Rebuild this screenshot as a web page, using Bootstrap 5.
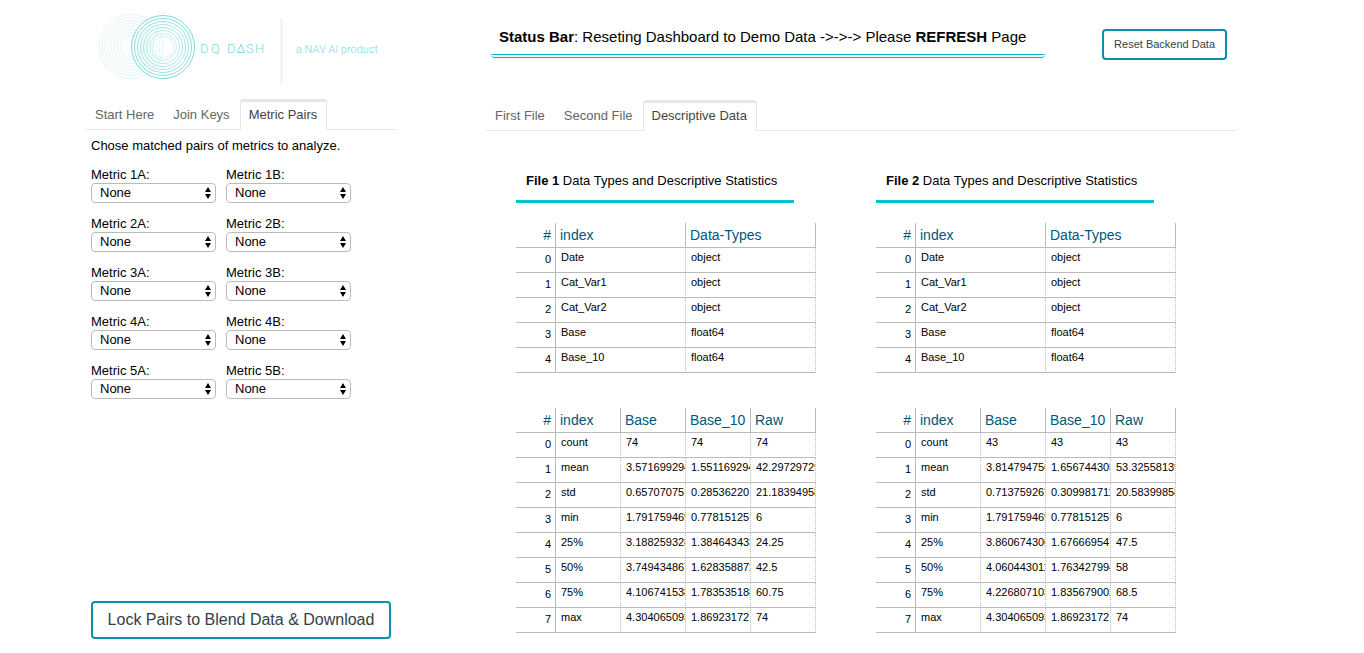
<!DOCTYPE html>
<html lang="en">
<head>
<meta charset="utf-8">
<meta name="viewport" content="width=device-width, initial-scale=1">
<title>DQ Dash</title>
<link href="https://cdn.jsdelivr.net/npm/bootstrap@5.3.0/dist/css/bootstrap.min.css" rel="stylesheet">
<style>
  body { font-family: "Liberation Sans", Arial, sans-serif; font-size: 13px; line-height: 16px; color: #000; background: #fff; }
  .page { padding: 0 128px 0 86px; column-gap: 90px; min-height: 100vh; }
  .side { flex: 0 0 310px; padding-bottom: 14px; }
  .main-area { flex: 1 1 0; min-width: 750px; }
  .brand-row { height: 99px; padding: 13px 0 0 12px; }
  .brand-row svg { font-family: Roboto, "Liberation Sans", sans-serif; }
  .status-row { height: 100px; padding-top: 21px; padding-left: 5px; }
  .status-bar { font-size: 15px; line-height: 20px; min-width: 554px; padding: 6px 8px 7px; border-bottom: 4px double #00b4c4; border-radius: 4px; }
  .btn-line { --bs-btn-color: #333f48; --bs-btn-border-color: #0a8fa8; --bs-btn-hover-bg: #e8f6f8; --bs-btn-hover-color: #333f48; --bs-btn-hover-border-color: #0a8fa8; --bs-btn-border-width: 2px; --bs-btn-border-radius: 4px; --bs-btn-bg: #fff; }
  .btn-reset { font-size: 11px; line-height: 15px; padding: 6px 10px; margin-top: 8px; margin-right: 9px; }
  .btn-lock { font-size: 16px; line-height: 22px; padding: 6px 0; width: 300px; }
  .nav-tabs { --bs-nav-tabs-border-color: #e6e6e6; --bs-nav-tabs-border-width: 1px; flex-wrap: nowrap; }
  .nav-tabs .nav-link { font-size: 13px; line-height: 16px; padding: 5px 9px 6px 8px; color: #666; border-width: 3px 1px 1px; border-radius: 4px 4px 0 0; border-color: transparent; }
  .nav-tabs .nav-link.active { color: #444; border-color: #e6e6e6 #e6e6e6 #fff; }
  .metric-form { padding-left: 5px; }
  .metric-grid { display: grid; grid-template-columns: 125px 125px; column-gap: 10px; row-gap: 12px; margin-top: 12px; }
  .metric-grid label { display: block; line-height: 17px; }
  .metric-grid select { display: block; width: 100%; height: 20px; appearance: none; border: 1px solid #bbb; border-radius: 4px; padding: 0 20px 0 8px; font-size: 13px; line-height: 18px; color: #000;
    background: #fff url("data:image/svg+xml,%3Csvg xmlns='http://www.w3.org/2000/svg' width='8' height='12'%3E%3Cpath d='M4 0L7 5H1zM4 12L1 7h6z' fill='%23000'/%3E%3C/svg%3E") no-repeat right 3px center; }
  .files { column-gap: 60px; padding: 40px 30px 20px; }
  .file-col { width: 300px; }
  .file-title { font-size: 13px; line-height: 20px; font-weight: 400; padding: 0 10px 9px; margin: 0 0 20px; width: 278px; border-bottom: 3px solid #00c2cb; white-space: nowrap; }
  .grid-table { width: 100%; table-layout: fixed; border-collapse: separate; border-spacing: 0; margin-bottom: 35px; font-size: 11px; }
  .grid-table th, .grid-table td { height: 25px; padding: 0 0 0 5px; border-bottom: 1px solid #bbb; border-right: 1px dotted #bbb; overflow: hidden; white-space: nowrap; vertical-align: top; line-height: 19px; font-weight: 400; }
  .grid-table thead th { font-size: 14px; line-height: 24px; color: #00577c; padding-left: 4px; border-right-style: solid; }
  .grid-table tr > :first-child { text-align: right; padding: 0 4px 0 0; border-right-style: solid; }
  .grid-table tbody th { line-height: 23px; }
  .col-num { width: 40px; }
</style>
</head>
<body>
<div class="page d-flex">
  <aside class="side d-flex flex-column">
    <header class="brand-row">
      <svg width="290" height="72" viewBox="0 0 290 72" role="img" aria-label="DQ Dash, a NAV AI product">
        <g fill="none" stroke="#38c6c9" stroke-width=".7" opacity=".2">
          <circle cx="33" cy="33.500" r="32"/><circle cx="33" cy="33.500" r="29"/><circle cx="33" cy="33.500" r="26"/><circle cx="33" cy="33.500" r="23"/><circle cx="33" cy="33.500" r="20"/><circle cx="33" cy="33.500" r="17"/><circle cx="33" cy="33.500" r="14"/><circle cx="33" cy="33.500" r="11"/>
        </g>
        <g fill="none" stroke="#1fbfc4" opacity=".65">
          <circle cx="65" cy="34" r="31.500" stroke-width=".9"/><circle cx="65" cy="34" r="28.500" stroke-width=".8"/><circle cx="65" cy="34" r="25.500" stroke-width=".7"/><circle cx="65" cy="34" r="22.500" stroke-width=".6"/><circle cx="65" cy="34" r="19.500" stroke-width=".6"/><circle cx="65" cy="34" r="16.500" stroke-width=".5"/><circle cx="65" cy="34" r="13.500" stroke-width=".4"/><circle cx="65" cy="34" r="11" stroke-width=".3"/>
        </g>
        <g fill="#7fdadc" font-weight="300">
          <text x="102" y="40" font-size="13">D</text><text x="113" y="40" font-size="13">Q</text><text x="129" y="40" font-size="13">D</text><text x="148" y="40" font-size="13">S</text><text x="157" y="40" font-size="13">H</text>
          <text x="198" y="40" font-size="11">a NAV AI product</text>
        </g>
        <path d="M143 31.500l-3.500 8h7z" fill="none" stroke="#7fdadc"/>
        <path d="M183.500 5v65" stroke="#eee" stroke-width="2"/>
      </svg>
    </header>
    <ul class="nav nav-tabs">
      <li class="nav-item"><a class="nav-link" href="#start">Start Here</a></li>
      <li class="nav-item"><a class="nav-link" href="#keys">Join Keys</a></li>
      <li class="nav-item"><a class="nav-link active" aria-current="page" href="#pairs">Metric Pairs</a></li>
    </ul>
    <form class="metric-form d-flex flex-column flex-grow-1">
      <p class="mb-0 mt-2">Chose matched pairs of metrics to analyze.</p>
      <div class="metric-grid">
        <div><label for="m1a">Metric 1A:</label><select id="m1a"><option>None</option></select></div>
        <div><label for="m1b">Metric 1B:</label><select id="m1b"><option>None</option></select></div>
        <div><label for="m2a">Metric 2A:</label><select id="m2a"><option>None</option></select></div>
        <div><label for="m2b">Metric 2B:</label><select id="m2b"><option>None</option></select></div>
        <div><label for="m3a">Metric 3A:</label><select id="m3a"><option>None</option></select></div>
        <div><label for="m3b">Metric 3B:</label><select id="m3b"><option>None</option></select></div>
        <div><label for="m4a">Metric 4A:</label><select id="m4a"><option>None</option></select></div>
        <div><label for="m4b">Metric 4B:</label><select id="m4b"><option>None</option></select></div>
        <div><label for="m5a">Metric 5A:</label><select id="m5a"><option>None</option></select></div>
        <div><label for="m5b">Metric 5B:</label><select id="m5b"><option>None</option></select></div>
      </div>
      <button type="button" class="btn btn-line btn-lock mt-auto">Lock Pairs to Blend Data &amp; Download</button>
    </form>
  </aside>

  <main class="main-area">
    <div class="status-row d-flex justify-content-between align-items-start">
      <div class="status-bar text-nowrap" role="status"><b>Status Bar</b>: Reseting Dashboard to Demo Data -&gt;-&gt;-&gt; Please <b>REFRESH</b> Page</div>
      <button type="button" class="btn btn-line btn-reset text-nowrap">Reset Backend Data</button>
    </div>
    <ul class="nav nav-tabs">
      <li class="nav-item"><a class="nav-link" href="#first">First File</a></li>
      <li class="nav-item"><a class="nav-link" href="#second">Second File</a></li>
      <li class="nav-item"><a class="nav-link active" aria-current="page" href="#descriptive">Descriptive Data</a></li>
    </ul>
    <div class="files d-flex">
      <section class="file-col">
        <h2 class="file-title"><b>File 1</b> Data Types and Descriptive Statistics</h2>
        <table class="grid-table">
          <colgroup><col class="col-num"><col><col></colgroup>
          <thead><tr><th>#</th><th>index</th><th>Data-Types</th></tr></thead>
          <tbody>
            <tr><th>0</th><td>Date</td><td>object</td></tr>
            <tr><th>1</th><td>Cat_Var1</td><td>object</td></tr>
            <tr><th>2</th><td>Cat_Var2</td><td>object</td></tr>
            <tr><th>3</th><td>Base</td><td>float64</td></tr>
            <tr><th>4</th><td>Base_10</td><td>float64</td></tr>
          </tbody>
        </table>
        <table class="grid-table mb-0">
          <colgroup><col class="col-num"><col><col><col><col></colgroup>
          <thead><tr><th>#</th><th>index</th><th>Base</th><th>Base_10</th><th>Raw</th></tr></thead>
          <tbody>
            <tr><th>0</th><td>count</td><td>74</td><td>74</td><td>74</td></tr>
            <tr><th>1</th><td>mean</td><td>3.571699294</td><td>1.551169294</td><td>42.29729729</td></tr>
            <tr><th>2</th><td>std</td><td>0.65707075</td><td>0.28536220</td><td>21.18394958</td></tr>
            <tr><th>3</th><td>min</td><td>1.791759469</td><td>0.77815125</td><td>6</td></tr>
            <tr><th>4</th><td>25%</td><td>3.188259328</td><td>1.384643433</td><td>24.25</td></tr>
            <tr><th>5</th><td>50%</td><td>3.749434867</td><td>1.628358872</td><td>42.5</td></tr>
            <tr><th>6</th><td>75%</td><td>4.106741538</td><td>1.783535188</td><td>60.75</td></tr>
            <tr><th>7</th><td>max</td><td>4.304065093</td><td>1.86923172</td><td>74</td></tr>
          </tbody>
        </table>
      </section>
      <section class="file-col">
        <h2 class="file-title"><b>File 2</b> Data Types and Descriptive Statistics</h2>
        <table class="grid-table">
          <colgroup><col class="col-num"><col><col></colgroup>
          <thead><tr><th>#</th><th>index</th><th>Data-Types</th></tr></thead>
          <tbody>
            <tr><th>0</th><td>Date</td><td>object</td></tr>
            <tr><th>1</th><td>Cat_Var1</td><td>object</td></tr>
            <tr><th>2</th><td>Cat_Var2</td><td>object</td></tr>
            <tr><th>3</th><td>Base</td><td>float64</td></tr>
            <tr><th>4</th><td>Base_10</td><td>float64</td></tr>
          </tbody>
        </table>
        <table class="grid-table mb-0">
          <colgroup><col class="col-num"><col><col><col><col></colgroup>
          <thead><tr><th>#</th><th>index</th><th>Base</th><th>Base_10</th><th>Raw</th></tr></thead>
          <tbody>
            <tr><th>0</th><td>count</td><td>43</td><td>43</td><td>43</td></tr>
            <tr><th>1</th><td>mean</td><td>3.814794756</td><td>1.656744305</td><td>53.32558139</td></tr>
            <tr><th>2</th><td>std</td><td>0.713759267</td><td>0.309981711</td><td>20.58399858</td></tr>
            <tr><th>3</th><td>min</td><td>1.791759469</td><td>0.77815125</td><td>6</td></tr>
            <tr><th>4</th><td>25%</td><td>3.860674306</td><td>1.676669547</td><td>47.5</td></tr>
            <tr><th>5</th><td>50%</td><td>4.060443011</td><td>1.763427994</td><td>58</td></tr>
            <tr><th>6</th><td>75%</td><td>4.226807103</td><td>1.835679002</td><td>68.5</td></tr>
            <tr><th>7</th><td>max</td><td>4.304065093</td><td>1.86923172</td><td>74</td></tr>
          </tbody>
        </table>
      </section>
    </div>
  </main>
</div>
<script src="https://cdn.jsdelivr.net/npm/bootstrap@5.3.0/dist/js/bootstrap.bundle.min.js"></script>
</body>
</html>
